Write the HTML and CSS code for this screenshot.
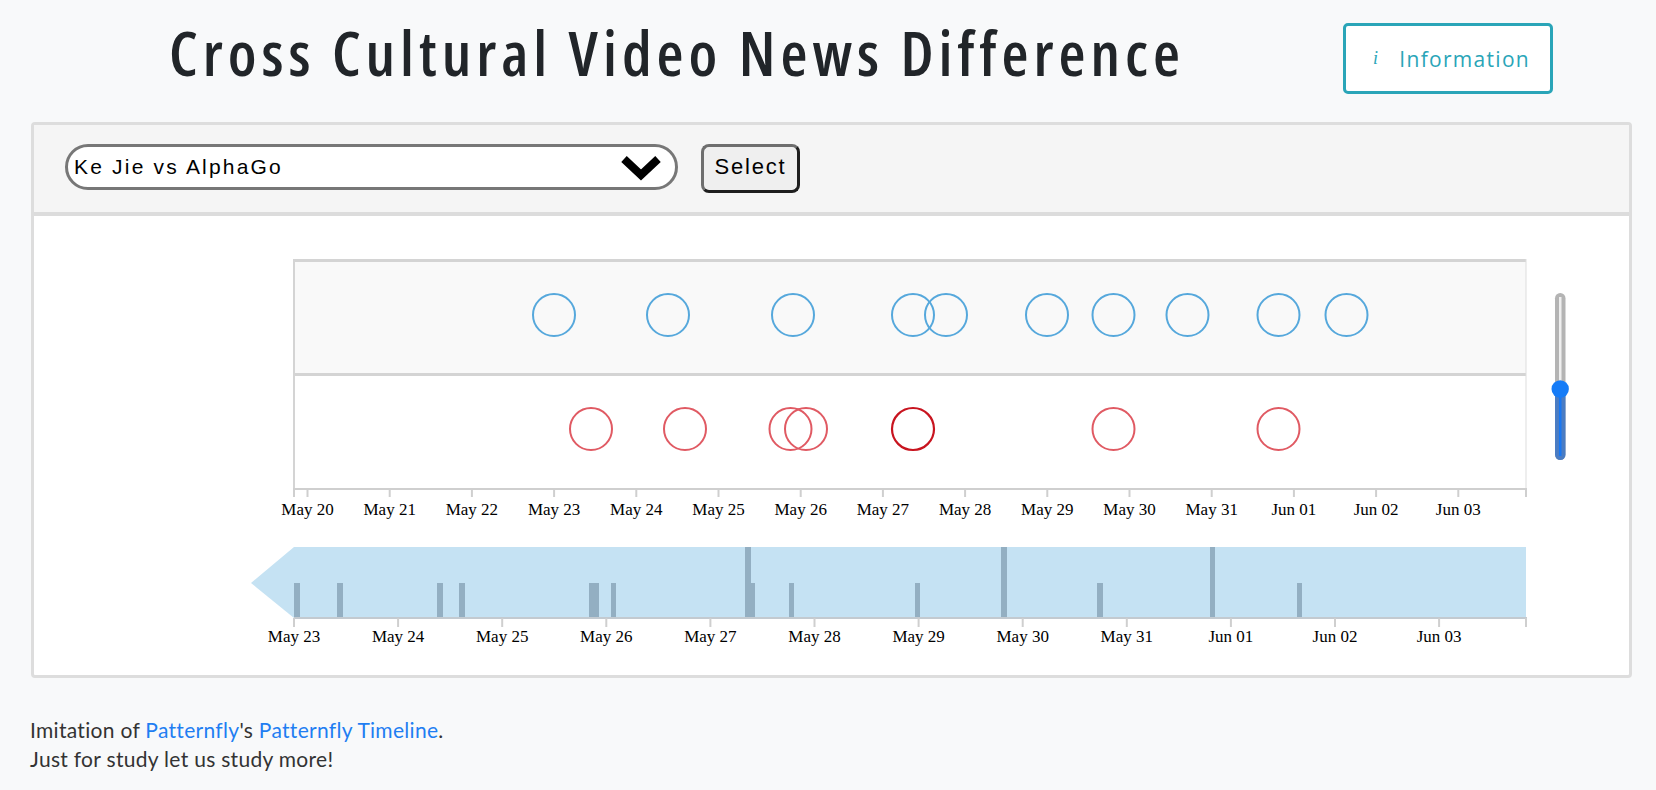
FILE: index.html
```html
<!DOCTYPE html>
<html lang="en">
<head>
<meta charset="utf-8">
<title>Cross Cultural Video News Difference</title>
<link rel="stylesheet" href="styles.css">
</head>
<body>
<header class="top">
  <h1 class="title">Cross Cultural Video News Difference</h1>
  <button class="info-btn"><span class="info-i">i</span>Information</button>
</header>

<section class="card">
  <div class="card-head">
    <div class="picker">
      <span class="picker-text">Ke Jie vs AlphaGo</span>
      <svg class="chev" width="42" height="26" viewBox="0 0 42 26"><polyline points="4,4 21,20 38,4" fill="none" stroke="#000" stroke-width="8" stroke-linejoin="miter"/></svg>
    </div>
    <button class="select-btn">Select</button>
  </div>
  <div class="card-body">
    <svg class="chart" width="1595" height="459" viewBox="34 216 1595 459">
      <!-- lanes -->
      <rect x="294" y="260" width="1232" height="114" fill="#f9f9f9"/>
      <rect x="293" y="259" width="1233" height="3" fill="#d4d4d4"/>
      <rect x="293" y="373" width="1233" height="3" fill="#d4d4d4"/>
      <rect x="293" y="259" width="2" height="231" fill="#d4d4d4"/>
      <rect x="1525.5" y="259" width="1" height="231" fill="#dddddd"/>
      <rect x="293" y="488" width="1234" height="2" fill="#cfcfcf"/>
      <g stroke="#cfcfcf" stroke-width="2">
        <line x1="294" y1="489" x2="294" y2="497"/>
        <line x1="1526" y1="489" x2="1526" y2="497"/>
        <line x1="307.5" y1="489" x2="307.5" y2="497"/>
        <line x1="389.7" y1="489" x2="389.7" y2="497"/>
        <line x1="471.9" y1="489" x2="471.9" y2="497"/>
        <line x1="554.1" y1="489" x2="554.1" y2="497"/>
        <line x1="636.3" y1="489" x2="636.3" y2="497"/>
        <line x1="718.5" y1="489" x2="718.5" y2="497"/>
        <line x1="800.7" y1="489" x2="800.7" y2="497"/>
        <line x1="882.9" y1="489" x2="882.9" y2="497"/>
        <line x1="965.1" y1="489" x2="965.1" y2="497"/>
        <line x1="1047.3" y1="489" x2="1047.3" y2="497"/>
        <line x1="1129.5" y1="489" x2="1129.5" y2="497"/>
        <line x1="1211.7" y1="489" x2="1211.7" y2="497"/>
        <line x1="1293.9" y1="489" x2="1293.9" y2="497"/>
        <line x1="1376.1" y1="489" x2="1376.1" y2="497"/>
        <line x1="1458.3" y1="489" x2="1458.3" y2="497"/>
      </g>
      <g class="tick" text-anchor="middle">
        <text x="307.5" y="515">May 20</text>
        <text x="389.7" y="515">May 21</text>
        <text x="471.9" y="515">May 22</text>
        <text x="554.1" y="515">May 23</text>
        <text x="636.3" y="515">May 24</text>
        <text x="718.5" y="515">May 25</text>
        <text x="800.7" y="515">May 26</text>
        <text x="882.9" y="515">May 27</text>
        <text x="965.1" y="515">May 28</text>
        <text x="1047.3" y="515">May 29</text>
        <text x="1129.5" y="515">May 30</text>
        <text x="1211.7" y="515">May 31</text>
        <text x="1293.9" y="515">Jun 01</text>
        <text x="1376.1" y="515">Jun 02</text>
        <text x="1458.3" y="515">Jun 03</text>
      </g>
      <!-- events -->
      <g fill="none" stroke="#56a8dc" stroke-width="2">
        <circle cx="554" cy="315" r="21"/>
        <circle cx="668" cy="315" r="21"/>
        <circle cx="793" cy="315" r="21"/>
        <circle cx="913" cy="315" r="21"/>
        <circle cx="946" cy="315" r="21"/>
        <circle cx="1047" cy="315" r="21"/>
        <circle cx="1113.5" cy="315" r="21"/>
        <circle cx="1187.5" cy="315" r="21"/>
        <circle cx="1278.5" cy="315" r="21"/>
        <circle cx="1346.5" cy="315" r="21"/>
      </g>
      <g fill="none" stroke="#e05a63" stroke-width="2">
        <circle cx="591" cy="429" r="21"/>
        <circle cx="685" cy="429" r="21"/>
        <circle cx="790.5" cy="429" r="21"/>
        <circle cx="806" cy="429" r="21"/>
        <circle cx="1113.5" cy="429" r="21"/>
        <circle cx="1278.5" cy="429" r="21"/>
      </g>
      <circle cx="913" cy="429" r="21" fill="none" stroke="#c8141f" stroke-width="2.2"/>
      <!-- zoom slider -->
      <rect x="1555" y="293" width="10.5" height="167" rx="5.2" fill="#b4b4b4"/>
      <rect x="1559" y="297" width="2.5" height="92" fill="#efefef"/>
      <rect x="1555" y="385" width="10.5" height="75" rx="5.2" fill="#4a7cc3"/>
      <rect x="1559" y="389" width="2.5" height="67" fill="#1877f2"/>
      <circle cx="1560.2" cy="389" r="8.7" fill="#167cf7"/>
      <!-- brush / overview -->
      <polygon points="294,547 1526,547 1526,618 294,618 251,583" fill="#c5e2f3"/>
      <g fill="#93afc2">
        <rect x="294" y="583" width="6" height="35"/>
        <rect x="337" y="583" width="6" height="35"/>
        <rect x="437" y="583" width="6" height="35"/>
        <rect x="459" y="583" width="6" height="35"/>
        <rect x="589" y="583" width="10" height="35"/>
        <rect x="611" y="583" width="5" height="35"/>
        <rect x="745" y="547" width="6" height="71"/>
        <rect x="751" y="583" width="4" height="35"/>
        <rect x="789" y="583" width="5" height="35"/>
        <rect x="915" y="583" width="5" height="35"/>
        <rect x="1001" y="547" width="6" height="71"/>
        <rect x="1097" y="583" width="6" height="35"/>
        <rect x="1210" y="547" width="5" height="71"/>
        <rect x="1297" y="583" width="5" height="35"/>
      </g>
      <rect x="294" y="617" width="1233" height="2" fill="#c3cad0"/>
      <g stroke="#cfcfcf" stroke-width="2">
        <line x1="294" y1="618" x2="294" y2="627"/>
        <line x1="398.1" y1="618" x2="398.1" y2="627"/>
        <line x1="502.2" y1="618" x2="502.2" y2="627"/>
        <line x1="606.3" y1="618" x2="606.3" y2="627"/>
        <line x1="710.4" y1="618" x2="710.4" y2="627"/>
        <line x1="814.5" y1="618" x2="814.5" y2="627"/>
        <line x1="918.6" y1="618" x2="918.6" y2="627"/>
        <line x1="1022.7" y1="618" x2="1022.7" y2="627"/>
        <line x1="1126.8" y1="618" x2="1126.8" y2="627"/>
        <line x1="1230.9" y1="618" x2="1230.9" y2="627"/>
        <line x1="1335" y1="618" x2="1335" y2="627"/>
        <line x1="1439.1" y1="618" x2="1439.1" y2="627"/>
        <line x1="1526" y1="618" x2="1526" y2="627"/>
      </g>
      <g class="tick" text-anchor="middle">
        <text x="294" y="642">May 23</text>
        <text x="398.1" y="642">May 24</text>
        <text x="502.2" y="642">May 25</text>
        <text x="606.3" y="642">May 26</text>
        <text x="710.4" y="642">May 27</text>
        <text x="814.5" y="642">May 28</text>
        <text x="918.6" y="642">May 29</text>
        <text x="1022.7" y="642">May 30</text>
        <text x="1126.8" y="642">May 31</text>
        <text x="1230.9" y="642">Jun 01</text>
        <text x="1335" y="642">Jun 02</text>
        <text x="1439.1" y="642">Jun 03</text>
      </g>
    </svg>
  </div>
</section>

<footer class="foot">
  <p>Imitation of <a href="#">Patternfly</a>'s <a href="#">Patternfly Timeline</a>.</p>
  <p>Just for study let us study more!</p>
</footer>
</body>
</html>
```

FILE: styles.css
```css
html, body {
  margin: 0;
  padding: 0;
}
body {
  background: #f8f9fa;
  width: 1656px;
  height: 790px;
  overflow: hidden;
  font-family: "Liberation Sans", Arial, sans-serif;
  color: #212529;
}
.top {
  display: flex;
  align-items: flex-start;
  padding-top: 23px;
  height: 71px;
}
.title {
  margin: -2px 0 0 169px;
  font-family: "Open Sans", "DejaVu Sans Condensed", sans-serif;
  font-stretch: 75%;
  font-weight: 600;
  font-size: 62px;
  line-height: 62px;
  letter-spacing: 5px;
  color: #212529;
  white-space: nowrap;
  flex-shrink: 1;
  min-width: 0;
}
.info-btn {
  flex-shrink: 0;
  margin-left: auto;
  margin-right: 103px;
  width: 210px;
  height: 71px;
  box-sizing: border-box;
  border: 3.5px solid #2aa5b8;
  border-radius: 5px;
  background: #fff;
  color: #2aa5b8;
  font-family: "Open Sans", "Noto Sans", sans-serif;
  font-size: 21px;
  letter-spacing: 1.3px;
  display: flex;
  align-items: center;
  padding: 0 0 0 27px;
}
.info-i {
  font-family: "Liberation Serif", serif;
  font-style: italic;
  font-size: 18px;
  margin-right: 20px;
}
.card {
  margin: 28px 24px 0 31px;
  border: 3px solid #dddddd;
  border-radius: 4px;
  background: #fff;
  box-sizing: border-box;
  width: 1601px;
}
.card-head {
  background: #f5f5f5;
  border-bottom: 4px solid #dcdcdc;
  padding: 19px 0 22px 31px;
  display: flex;
  align-items: flex-start;
  height: 46px;
}
.picker {
  width: 613px;
  height: 46px;
  box-sizing: border-box;
  border: 3px solid #777;
  border-radius: 23px;
  background: #fff;
  display: flex;
  align-items: center;
  padding: 0 13px 0 6px;
}
.picker-text {
  font-size: 21px;
  letter-spacing: 2.2px;
  color: #000;
  flex: 1;
}
.chev {
  display: block;
  margin-top: 2px;
}
.select-btn {
  margin-left: 23px;
  width: 99px;
  height: 49px;
  box-sizing: border-box;
  background: #efefef;
  border: 3px solid;
  border-color: #6e6e6e #1e1e1e #1e1e1e #6e6e6e;
  border-radius: 8px;
  font-family: "Liberation Sans", Arial, sans-serif;
  font-size: 22px;
  letter-spacing: 1.8px;
  color: #000;
  padding: 0 0 3px 0;
}
.card-body {
  height: 459px;
}
.chart {
  display: block;
}
.tick text {
  font-family: "Liberation Serif", "Times New Roman", serif;
  font-size: 17px;
  fill: #000;
}
.foot {
  margin: 37px 0 0 30px;
  font-family: Lato, "Open Sans", sans-serif;
  font-size: 21px;
  line-height: 29px;
  letter-spacing: 0.3px;
  color: #333;
}
.foot p {
  margin: 0;
}
.foot a {
  color: #1f7ef2;
  text-decoration: none;
}
```
